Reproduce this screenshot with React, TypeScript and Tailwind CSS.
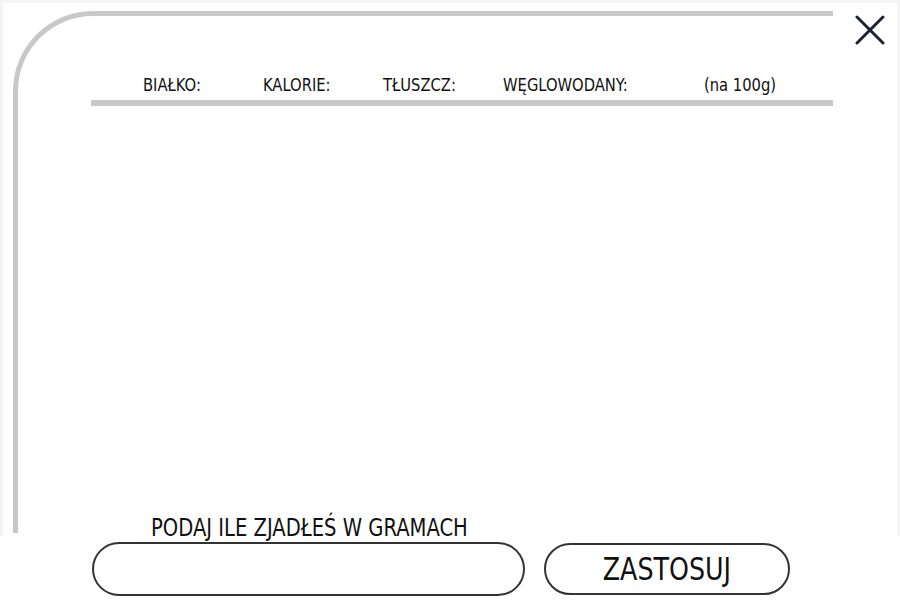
import React from "react";

const font = {
  fontFamily: '"DejaVu Sans Condensed", Roboto, sans-serif',
};

const columns = [
  { label: "BIAŁKO:", w: "w-[120px]" },
  { label: "KALORIE:", w: "w-[120px]" },
  { label: "TŁUSZCZ:", w: "w-[120px]" },
  { label: "WĘGLOWODANY:", w: "w-[201px]" },
  { label: "(na 100g)", w: "w-[100px]" },
];

function CloseIcon() {
  return (
    <svg width="30" height="30" viewBox="0 0 30 30" fill="none">
      <path
        d="M2 2 L28 28 M28 2 L2 28"
        stroke="#1a2233"
        strokeWidth="3"
        strokeLinecap="round"
      />
    </svg>
  );
}

export default function App() {
  return (
    <div
      className="w-[900px] h-[600px] bg-white overflow-hidden text-[#111]"
      style={font}
    >
      {/* top area */}
      <div className="h-[536px] bg-[#f4f4f4] pl-[3px] pt-[3px] pr-[3px]">
        <div className="h-full bg-white flex">
          {/* panel */}
          <div className="ml-[10px] mt-[8px] w-[820px] h-[522px] border-l-[5px] border-t-[5px] border-[#c8c8c8] rounded-tl-[80px] flex flex-col">
            <div className="flex pl-[125px] mt-[57px] text-[18px] leading-[24px]">
              {columns.map((c) => (
                <div key={c.label} className={c.w + " whitespace-nowrap"}>
                  <span className="inline-block scale-x-[0.91] origin-left">
                    {c.label}
                  </span>
                </div>
              ))}
            </div>
            <div className="ml-[73px] mt-[3px] h-[6px] bg-[#c8c8c8]" />
            <div className="flex-1" />
            <div className="pl-[133px] text-[25px] leading-[30px] -mb-[10px] whitespace-nowrap">
              <span className="inline-block scale-x-[0.87] origin-left">
                PODAJ ILE ZJADŁEŚ W GRAMACH
              </span>
            </div>
          </div>

          {/* close */}
          <div className="ml-[22px] mt-[12px]">
            <button className="block">
              <CloseIcon />
            </button>
          </div>
        </div>
      </div>

      {/* input row */}
      <div className="flex items-center mt-[6px] pl-[92px] gap-[19px]">
        <input
          className="w-[433px] h-[54px] rounded-full border-2 border-[#333] bg-white outline-none px-6 text-[22px]"
          type="text"
        />
        <button className="w-[246px] h-[52px] rounded-full border-2 border-[#333] bg-white text-[32px] leading-none">
          <span className="inline-block scale-x-[0.88]">ZASTOSUJ</span>
        </button>
      </div>
    </div>
  );
}
